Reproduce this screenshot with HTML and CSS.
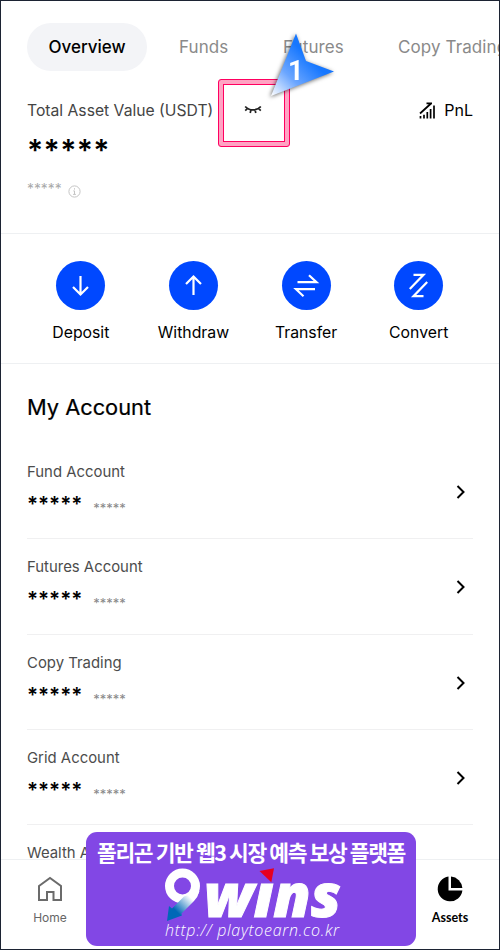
FILE: index.html
```html
<!DOCTYPE html>
<html lang="en">
<head>
    <meta charset="utf-8">
    <meta name="viewport" content="width=device-width, initial-scale=1">
    <title>Assets</title>
    <link rel="stylesheet" href="styles.css">
</head>
<body>
    <div class="phone">
        <nav class="tabs">
            <a class="tab active">Overview</a>
            <a class="tab funds">Funds</a>
            <a class="tab futures">Futures</a>
            <a class="tab copy">Copy Trading</a>
        </nav>

        <section class="total">
            <div class="total-head">
                <span class="total-label">Total Asset Value (USDT)</span>
                <svg class="eye" width="18" height="12" viewBox="0 0 18 12" fill="none" stroke="#222" stroke-width="1.7">
                    <path d="M1.2 2.5C5 7 13 7 16.8 2.5M3.4 4.7L1.2 6.7M7 5.8L6.2 9M11 5.8L11.8 9M14.6 4.7L16.8 6.7"/>
                </svg>
                <svg class="pnl-icon" width="17" height="17" viewBox="0 0 17 17" fill="none" stroke="#000" stroke-width="1.7">
                    <path d="M1 11.5L12 1.5M7.5 1.3H13M1.5 14v2.5M5 12.8v3.7M8.3 10v6.5M11.6 7v9.5M15 3.5v13"/>
                </svg>
                <span class="pnl">PnL</span>
            </div>
            <div class="total-value">*****</div>
            <div class="total-sub">
                <span>*****</span>
                <svg width="13" height="13" viewBox="0 0 13 13" fill="none" stroke="#c4c4c4">
                    <circle cx="6.5" cy="6.5" r="5.6"/>
                    <path d="M6.5 3.2v1.4M5.3 5.9h1.2v3.4M5.1 9.4h2.8"/>
                </svg>
            </div>
        </section>

        <section class="actions">
            <div class="action">
                <svg class="action-icon" viewBox="0 0 49 49"><path d="M24.5 15v18.5M17 26l7.5 7.5L32 26"/></svg>
                <span>Deposit</span>
            </div>
            <div class="action">
                <svg class="action-icon" viewBox="0 0 49 49"><path d="M24.5 34V15.5M17 23l7.5-7.5L32 23"/></svg>
                <span>Withdraw</span>
            </div>
            <div class="action">
                <svg class="action-icon" viewBox="0 0 49 49"><path d="M15.5 21.2h19l-7.5-7M33 28.2H14l7.5 7"/></svg>
                <span>Transfer</span>
            </div>
            <div class="action">
                <svg class="action-icon" viewBox="0 0 49 49"><path d="M19.5 13.8h10L15.8 28M33.2 21L19.5 35.2h10"/></svg>
                <span>Convert</span>
            </div>
        </section>

        <section class="accounts">
            <h2>My Account</h2>
            <div class="account">
                <div>
                    <div class="account-name">Fund Account</div>
                    <div class="account-value"><b>*****</b><small>*****</small></div>
                </div>
                <svg class="chevron" width="10" height="14" viewBox="0 0 10 14"><path d="M1.5 1l6 6-6 6"/></svg>
            </div>
            <div class="account">
                <div>
                    <div class="account-name">Futures Account</div>
                    <div class="account-value"><b>*****</b><small>*****</small></div>
                </div>
                <svg class="chevron" width="10" height="14" viewBox="0 0 10 14"><path d="M1.5 1l6 6-6 6"/></svg>
            </div>
            <div class="account">
                <div>
                    <div class="account-name">Copy Trading</div>
                    <div class="account-value"><b>*****</b><small>*****</small></div>
                </div>
                <svg class="chevron" width="10" height="14" viewBox="0 0 10 14"><path d="M1.5 1l6 6-6 6"/></svg>
            </div>
            <div class="account">
                <div>
                    <div class="account-name">Grid Account</div>
                    <div class="account-value"><b>*****</b><small>*****</small></div>
                </div>
                <svg class="chevron" width="10" height="14" viewBox="0 0 10 14"><path d="M1.5 1l6 6-6 6"/></svg>
            </div>
            <div class="account last">
                <div class="account-name">Wealth Account</div>
            </div>
        </section>

        <nav class="bottom-nav">
            <div class="nav-item">
                <svg width="26" height="26" viewBox="0 0 26 26" fill="none" stroke="#6b6b6b" stroke-width="2">
                    <path d="M2 10L13 2l11 8v14h-7.5v-8H10v8H2z"/>
                </svg>
                <span>Home</span>
            </div>
            <div class="nav-item selected">
                <svg width="26" height="26" viewBox="0 0 26 26">
                    <path d="M11.5.6A12.4 12.4 0 1 0 25.4 14.5H11.5z"/>
                    <path d="M14 .6A12.4 12.4 0 0 1 25.4 12H14z"/>
                </svg>
                <span>Assets</span>
            </div>
        </nav>
    </div>

    <!-- step marker -->
    <div class="highlight"></div>
    <svg class="pointer" width="74" height="74" viewBox="0 0 74 74">
        <defs>
            <linearGradient id="blue" gradientUnits="userSpaceOnUse" x1="6" y1="66" x2="44" y2="28">
                <stop offset="0" stop-color="#fff"/>
                <stop offset=".5" stop-color="#6ba6ff"/>
                <stop offset="1" stop-color="#1677ff"/>
            </linearGradient>
        </defs>
        <path d="M31 3.5L41 31l28 10.500L6 66z" fill="url(#blue)"/>
        <text class="pointer-num" x="23" y="49.5">1</text>
    </svg>

    <div class="banner">
        <div class="banner-title">폴리곤 기반 웹3 시장 예측 보상 플랫폼</div>
        <svg class="logo" width="180" height="56" viewBox="0 0 180 56">
            <defs>
                <linearGradient id="tail" gradientUnits="userSpaceOnUse" x1="29" y1="30" x2="15" y2="44">
                    <stop offset="0" stop-color="#fff"/>
                    <stop offset="1" stop-color="#0068b7"/>
                </linearGradient>
            </defs>
            <circle cx="21.5" cy="19" r="13" fill="none" stroke="#fff" stroke-width="9"/>
            <path d="M38.500 24Q37 30 33 34L20.500 46.500l.5 2L6 54l2-15 3 2.500L23 29.500z" fill="url(#tail)"/>
            <text class="logo-text" x="43" y="50" textLength="137" lengthAdjust="spacingAndGlyphs">wıns</text>
            <path d="M98.500 4l14.500-2.700-2.700 14z" fill="#e60020"/>
        </svg>
        <div class="banner-url">http:// playtoearn.co.kr</div>
    </div>
</body>
</html>
```
FILE: styles.css
```css
body {
    margin: 0;
    font-family: Inter, sans-serif;
    position: relative;
    height: 950px;
    overflow: hidden;
}
.phone {
    box-sizing: border-box;
    height: 950px;
    border: 1px solid #1c2333;
    background: #fff;
    display: flex;
    flex-direction: column;
    overflow: hidden;
}
svg {
    display: block;
    flex: none;
}

/* tabs */
.tabs {
    display: flex;
    align-items: center;
    height: 48px;
    margin: 22px 0 0 26px;
    white-space: nowrap;
}
.tab {
    flex: none;
    font-size: 17px;
    letter-spacing: 0.1px;
    color: #8a8a8a;
}
.tab.active {
    box-sizing: border-box;
    width: 120px;
    line-height: 48px;
    text-align: center;
    border-radius: 24px;
    background: #f3f4f7;
    color: #000;
    font-weight: 500;
    letter-spacing: 0;
}
.funds {
    margin-left: 32px;
    width: 104px;
}
.futures {
    width: 115px;
}

/* total */
.total {
    box-sizing: border-box;
    height: 163px;
    flex: none;
    padding: 24px 26px 0;
    border-bottom: 1px solid #eef0f2;
}
.total-head {
    display: flex;
    align-items: center;
    height: 30px;
}
.total-label {
    width: 217px;
    font-size: 15.7px;
    color: #444;
    white-space: nowrap;
}
.pnl-icon {
    margin-left: auto;
}
.pnl {
    margin-left: 8px;
    font-size: 16px;
}
.total-value {
    height: 53px;
    line-height: 50px;
    font-size: 30px;
    font-weight: 600;
    letter-spacing: 0.4px;
}
.total-sub {
    display: flex;
    align-items: center;
    height: 26px;
    gap: 6px;
    font-size: 13.8px;
    color: #aaa;
}
.total-sub span {
    line-height: 20px;
    padding-bottom: 4px;
}

/* actions */
.actions {
    box-sizing: border-box;
    display: flex;
    flex: none;
    height: 130px;
    padding: 27px 24px 0 23.5px;
    border-bottom: 1px solid #eef0f2;
}
.action {
    flex: 1;
    display: flex;
    flex-direction: column;
    align-items: center;
    gap: 13px;
    font-size: 15.8px;
    line-height: 20px;
}
.action-icon {
    width: 49px;
    height: 49px;
    border-radius: 50%;
    background: #0048ff;
    fill: none;
    stroke: #fff;
    stroke-width: 2.2;
}

/* accounts */
.accounts {
    flex: 1;
    min-height: 0;
    overflow: hidden;
    padding: 0 26px;
}
h2 {
    margin: 0;
    height: 80px;
    line-height: 87px;
    font-size: 21.8px;
    font-weight: 400;
    -webkit-text-stroke: 0.2px #000;
}
.account {
    box-sizing: border-box;
    display: flex;
    justify-content: space-between;
    height: 95.3px;
    padding-top: 18px;
    border-bottom: 1px solid #f0f0f1;
}
.account-name {
    font-size: 14.9px;
    line-height: 20px;
    color: #4c4c4c;
}
.account-value {
    display: flex;
    align-items: baseline;
    gap: 11px;
    line-height: 44px;
}
.account-value b {
    font-size: 20.5px;
    font-weight: 600;
}
.account-value small {
    font-size: 13px;
    color: #888;
    position: relative;
    top: 2px;
}
.chevron {
    margin: 23px 7px 0 0;
    fill: none;
    stroke: #000;
    stroke-width: 2;
}
.last {
    border: 0;
}

/* bottom nav */
.bottom-nav {
    box-sizing: border-box;
    flex: none;
    height: 90px;
    display: flex;
    justify-content: space-between;
    border-top: 1px solid #eef0f2;
    background: #fff;
}
.nav-item {
    width: 98px;
    padding-top: 16px;
    display: flex;
    flex-direction: column;
    align-items: center;
    gap: 7px;
    font-size: 12px;
    line-height: 18px;
    color: #666;
}
.selected {
    color: #000;
    font-family: Lato, sans-serif;
    font-size: 12.5px;
    font-weight: 700;
}

/* overlays */
.highlight {
    position: absolute;
    left: 218px;
    top: 79px;
    box-sizing: border-box;
    width: 72px;
    height: 68px;
    border: 1px solid #ff0060;
    border-radius: 3px;
    box-shadow: inset 0 0 0 4px #ffa3c3, inset 0 0 0 5px #ff0060;
}
.pointer {
    position: absolute;
    left: 265px;
    top: 30px;
    filter: drop-shadow(-1px 1px 2px rgba(0, 0, 0, .6));
}
.pointer-num {
    font: 700 27px Roboto, sans-serif;
    fill: #fff;
}
.banner {
    position: absolute;
    left: 86px;
    top: 832px;
    width: 330px;
    height: 114px;
    border-radius: 11px;
    background: #8247e5;
    color: #fff;
    display: flex;
    flex-direction: column;
    align-items: center;
}
.banner-title {
    height: 35px;
    line-height: 40px;
    font-family: "Noto Sans CJK KR", sans-serif;
    font-size: 21.5px;
    font-weight: 700;
    letter-spacing: -1.4px;
    white-space: nowrap;
}
.logo {
    overflow: visible;
}
.logo-text {
    font: italic 800 61px "Open Sans", sans-serif;
    fill: #fff;
    stroke: #fff;
    stroke-width: 1;
}
.banner-url {
    margin-left: 3px;
    font-family: "Open Sans", sans-serif;
    font-size: 16px;
    font-style: italic;
    font-weight: 300;
    letter-spacing: 0.7px;
    line-height: 14px;
    white-space: nowrap;
}
```
